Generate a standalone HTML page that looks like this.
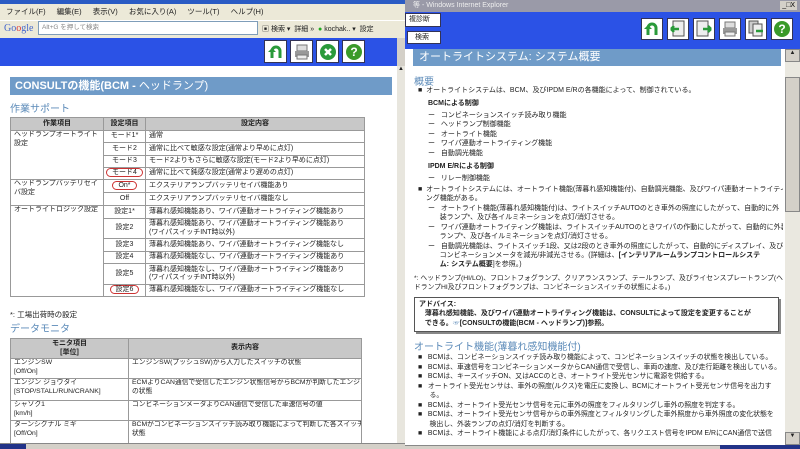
<!DOCTYPE html>
<html><head><meta charset="utf-8"><style>
*{margin:0;padding:0;box-sizing:border-box}
body{width:800px;height:449px;overflow:hidden;position:relative;background:#d4d0c8;font-family:"Liberation Sans","Noto Sans CJK JP",sans-serif;font-size:8px;color:#222}
.a{position:absolute}
.btn{position:absolute;width:23px;height:23px;background:#fff;border:1px solid #335;display:flex;align-items:center;justify-content:center}
table{border-collapse:collapse;position:absolute;background:#fff;table-layout:fixed}
td,th{border:1px solid #999;font-size:7px;padding:0 3px;vertical-align:middle;line-height:8.5px;white-space:nowrap;overflow:hidden}
td.w{white-space:normal;vertical-align:top}
th{background:#c8c8c8;font-weight:bold;text-align:center;vertical-align:middle}
td.c{text-align:center;vertical-align:middle;padding:0}
.ov{border:1px solid #c33;border-radius:8px;padding:0 5px}
.clip{position:absolute;left:405px;top:66px;width:378px;height:379px;overflow:hidden}
.r{position:absolute;left:13px;white-space:nowrap;font-size:7px;line-height:9.4px}
.t2 td{vertical-align:top;font-size:6.8px}
</style></head><body>
<!-- LEFT WINDOW -->
<div class="a" style="left:0;top:0;width:405px;height:4px;background:#2a5bc4"></div>
<div class="a" style="left:0;top:4px;width:405px;height:16px;background:#ece9d8;font-size:7.5px;line-height:16px;padding-left:6px;word-spacing:9px">ファイル(F) 編集(E) 表示(V) お気に入り(A) ツール(T) ヘルプ(H)</div>
<div class="a" style="left:0;top:20px;width:405px;height:18px;background:#ece9d8;border-top:1px solid #fff"></div>
<div class="a" style="left:4px;top:23px;font-size:10px;color:#4466cc;font-family:'Liberation Serif',serif">Go<span style="color:#d33">o</span>gle</div>
<div class="a" style="left:38px;top:21px;width:220px;height:14px;background:#fff;border:1px solid #7f9db9;font-size:6.5px;color:#888;line-height:12px;padding-left:3px">Alt+G を押して検索</div>
<div class="a" style="left:262px;top:24px;font-size:7px;color:#222;white-space:nowrap">▣ 検索 ▾ &nbsp;詳細 » &nbsp;<span style="color:#2a2">●</span> kochak.. ▾ &nbsp;設定</div>
<div class="a" style="left:0;top:38px;width:397px;height:28px;background:#2b52e6"></div>
<div class="btn" style="left:264px;top:40px"><svg width="18" height="18" viewBox="0 0 18 18"><path d="M5 15V8a4 4 0 0 1 8 0v7" fill="none" stroke="#2a9a3a" stroke-width="3"/><path d="M1 9l4-4 4 4z" fill="#2a9a3a"/></svg></div>
<div class="btn" style="left:290px;top:40px"><svg width="18" height="18"><rect x="4" y="2" width="10" height="6" fill="#ddd" stroke="#777"/><rect x="2" y="8" width="14" height="6" fill="#999"/><rect x="4" y="12" width="10" height="4" fill="#eee" stroke="#777"/></svg></div>
<div class="btn" style="left:316px;top:40px"><svg width="18" height="18"><circle cx="9" cy="9" r="8" fill="#2a9a3a"/><path d="M6 6l6 6M12 6l-6 6" stroke="#fff" stroke-width="2.5"/></svg></div>
<div class="btn" style="left:342px;top:40px"><svg width="18" height="18"><circle cx="9" cy="9" r="8" fill="#3a9a2a"/><text x="9" y="13" font-size="12" font-weight="bold" fill="#fff" text-anchor="middle" font-family="Liberation Sans">?</text></svg></div>
<div class="a" style="left:0;top:66px;width:397px;height:378px;background:#fff"></div>
<div class="a" style="left:397px;top:66px;width:8px;height:378px;background:#e8e6de"><div style="font-size:6px;text-align:center">▲</div></div>
<div class="a" style="left:10px;top:77px;width:382px;height:18px;background:#6f9bc8;color:#fff;font-size:11px;font-weight:bold;line-height:18px;padding-left:5px">CONSULTの機能(BCM - <span style="font-weight:normal">ヘッドランプ)</span></div>
<div class="a" style="left:10px;top:100px;font-size:10px;color:#5b8ab8">作業サポート</div>
<table style="left:10px;top:117px;width:355px">
<colgroup><col style="width:93px"><col style="width:42px"><col></colgroup>
<tr style="height:13px"><th>作業項目</th><th>設定項目</th><th>設定内容</th></tr>
<tr style="height:12px"><td rowspan="4" class="w">ヘッドランプオートライト設定</td><td class="c">モード1*</td><td>通常</td></tr>
<tr style="height:13px"><td class="c">モード2</td><td>通常に比べて敏感な設定(通常より早めに点灯)</td></tr>
<tr style="height:12px"><td class="c">モード3</td><td>モード2よりもさらに敏感な設定(モード2より早めに点灯)</td></tr>
<tr style="height:12px"><td class="c"><span class="ov">モード4</span></td><td>通常に比べて鈍感な設定(通常より遅めの点灯)</td></tr>
<tr style="height:13px"><td rowspan="2" class="w">ヘッドランプバッテリセイバ設定</td><td class="c"><span class="ov">On*</span></td><td>エクステリアランプバッテリセイバ機能あり</td></tr>
<tr style="height:13px"><td class="c">Off</td><td>エクステリアランプバッテリセイバ機能なし</td></tr>
<tr style="height:13px"><td rowspan="6" class="w">オートライトロジック設定</td><td class="c">設定1*</td><td>薄暮れ感知機能あり、ワイパ連動オートライティング機能あり</td></tr>
<tr style="height:20px"><td class="c">設定2</td><td>薄暮れ感知機能あり、ワイパ連動オートライティング機能あり<br>(ワイパスイッチINT時以外)</td></tr>
<tr style="height:13px"><td class="c">設定3</td><td>薄暮れ感知機能あり、ワイパ連動オートライティング機能なし</td></tr>
<tr style="height:12px"><td class="c">設定4</td><td>薄暮れ感知機能なし、ワイパ連動オートライティング機能あり</td></tr>
<tr style="height:21px"><td class="c">設定5</td><td>薄暮れ感知機能なし、ワイパ連動オートライティング機能あり<br>(ワイパスイッチINT時以外)</td></tr>
<tr style="height:12px"><td class="c"><span class="ov">設定6</span></td><td>薄暮れ感知機能なし、ワイパ連動オートライティング機能なし</td></tr>
</table>
<div class="a" style="left:10px;top:309px;font-size:7.5px">*: 工場出荷時の設定</div>
<div class="a" style="left:10px;top:320px;font-size:10px;color:#5b8ab8">データモニタ</div>
<table class="t2" style="left:10px;top:338px;width:352px">
<colgroup><col style="width:118px"><col></colgroup>
<tr style="height:20px"><th>モニタ項目<br>[単位]</th><th>表示内容</th></tr>
<tr style="height:20px"><td>エンジンSW<br>[Off/On]</td><td>エンジンSW(プッシュSW)から入力したスイッチの状態</td></tr>
<tr style="height:22px"><td>エンジン ジョウタイ<br>[STOP/STALL/RUN/CRANK]</td><td>ECMよりCAN通信で受信したエンジン状態信号からBCMが判断したエンジン<br>の状態</td></tr>
<tr style="height:20px"><td>シャソク1<br>[km/h]</td><td>コンビネーションメータよりCAN通信で受信した車速信号の値</td></tr>
<tr style="height:23px"><td>ターンシグナル ミギ<br>[Off/On]</td><td>BCMがコンビネーションスイッチ読み取り機能によって判断した各スイッチの<br>状態</td></tr>
</table>
<div class="a" style="left:0;top:443px;width:405px;height:6px;background:#d4d0c8;border-top:1px solid #888"></div>
<div class="a" style="left:0;top:444px;width:26px;height:5px;background:#223388"></div>

<!-- RIGHT WINDOW -->
<div class="a" style="left:405px;top:0;width:395px;height:12px;background:#9a9aa8;color:#eee;font-size:7px;line-height:12px;padding-left:8px">等 - Windows Internet Explorer<span style="position:absolute;right:3px;color:#000;background:#d4d0c8;padding:0 2px;line-height:9px;top:1px">_□X</span></div>
<div class="a" style="left:405px;top:12px;width:395px;height:37px;background:#2b52e6"></div>
<div class="a" style="left:405px;top:13px;width:36px;height:14px;background:#fff;border:1px solid #335;font-size:7px;line-height:12px;padding-left:3px">複診断</div>
<div class="a" style="left:407px;top:31px;width:34px;height:13px;background:#fff;border:1px solid #335;font-size:7px;line-height:11px;padding-left:7px">検索</div>
<div class="btn" style="left:641px;top:18px;width:22px;height:22px"><svg width="18" height="18"><path d="M5 15V8a4 4 0 0 1 8 0v7" fill="none" stroke="#2a9a3a" stroke-width="3"/><path d="M1 9l4-4 4 4z" fill="#2a9a3a"/></svg></div>
<div class="btn" style="left:667px;top:18px;width:22px;height:22px"><svg width="18" height="18"><rect x="4" y="1" width="11" height="15" fill="#eee" stroke="#555"/><path d="M2 9h8M2 9l3-3M2 9l3 3" stroke="#2a9a3a" stroke-width="2.5"/></svg></div>
<div class="btn" style="left:693px;top:18px;width:22px;height:22px"><svg width="18" height="18"><rect x="2" y="1" width="11" height="15" fill="#eee" stroke="#555"/><path d="M8 9h8M16 9l-3-3M16 9l-3 3" stroke="#2a9a3a" stroke-width="2.5"/></svg></div>
<div class="btn" style="left:719px;top:18px;width:22px;height:22px"><svg width="18" height="18"><rect x="4" y="2" width="10" height="6" fill="#ddd" stroke="#777"/><rect x="2" y="8" width="14" height="6" fill="#999"/><rect x="4" y="12" width="10" height="4" fill="#eee" stroke="#777"/></svg></div>
<div class="btn" style="left:745px;top:18px;width:22px;height:22px"><svg width="18" height="18"><rect x="2" y="1" width="9" height="12" fill="#ccc" stroke="#555"/><rect x="6" y="4" width="9" height="12" fill="#eee" stroke="#555"/><path d="M9 11h7" stroke="#2a9a3a" stroke-width="2.5"/></svg></div>
<div class="btn" style="left:771px;top:18px;width:22px;height:22px"><svg width="18" height="18"><circle cx="9" cy="9" r="8" fill="#3a9a2a"/><text x="9" y="13" font-size="12" font-weight="bold" fill="#fff" text-anchor="middle" font-family="Liberation Sans">?</text></svg></div>
<div class="a" style="left:405px;top:49px;width:380px;height:396px;background:#fff"></div>
<div class="a" style="left:785px;top:49px;width:15px;height:396px;background:#eae8e0"><div style="font-size:6px;text-align:center;background:#d4d0c8;border:1px solid #888;height:13px">▲</div><div style="margin-top:15px;height:135px;background:#d4d0c8;border:1px solid #888"></div><div style="position:absolute;bottom:0;width:15px;font-size:6px;text-align:center;background:#d4d0c8;border:1px solid #888;height:13px">▼</div></div>
<div class="a" style="left:413px;top:49px;width:368px;height:17px;background:#6f9bc8;color:#fff;font-size:11px;line-height:17px;padding-left:6px">オートライトシステム: システム概要</div>
<div class="clip">
<div class="a" style="left:9px;top:7px;font-size:10px;color:#5b8ab8">概要</div>
<div class="r" style="top:20px">■&nbsp; オートライトシステムは、BCM、及びIPDM E/Rの各機能によって、制御されている。</div>
<div class="r" style="top:33px;left:23px;font-weight:bold">BCMによる制御</div>
<div class="r" style="top:45px;left:23px">ー&nbsp;&nbsp; コンビネーションスイッチ読み取り機能<br>ー&nbsp;&nbsp; ヘッドランプ制御機能<br>ー&nbsp;&nbsp; オートライト機能<br>ー&nbsp;&nbsp; ワイパ連動オートライティング機能<br>ー&nbsp;&nbsp; 自動調光機能</div>
<div class="r" style="top:96px;left:23px;font-weight:bold">IPDM E/Rによる制御</div>
<div class="r" style="top:108px;left:23px">ー&nbsp;&nbsp; リレー制御機能</div>
<div class="r" style="top:119px">■&nbsp; オートライトシステムには、オートライト機能(薄暮れ感知機能付)、自動調光機能、及びワイパ連動オートライティ<br>&nbsp;&nbsp;&nbsp;&nbsp;ング機能がある。</div>
<div class="r" style="top:138px;left:23px">ー&nbsp;&nbsp; オートライト機能(薄暮れ感知機能付)は、ライトスイッチAUTOのとき車外の照度にしたがって、自動的に外<br>&nbsp;&nbsp;&nbsp;&nbsp;&nbsp;&nbsp;装ランプ*、及び各イルミネーションを点灯/消灯させる。<br>ー&nbsp;&nbsp; ワイパ連動オートライティング機能は、ライトスイッチAUTOのときワイパの作動にしたがって、自動的に外装<br>&nbsp;&nbsp;&nbsp;&nbsp;&nbsp;&nbsp;ランプ*、及び各イルミネーションを点灯/消灯させる。<br>ー&nbsp;&nbsp; 自動調光機能は、ライトスイッチ1段、又は2段のとき車外の照度にしたがって、自動的にディスプレイ、及び<br>&nbsp;&nbsp;&nbsp;&nbsp;&nbsp;&nbsp;コンビネーションメータを減光/非減光させる。(詳細は、<b>[インテリアルームランプコントロールシステ<br>&nbsp;&nbsp;&nbsp;&nbsp;&nbsp;&nbsp;ム: システム概要</b>]を参照。)</div>
<div class="r" style="top:208px;left:9px;font-size:6.8px">*: ヘッドランプ(HI/LO)、フロントフォグランプ、クリアランスランプ、テールランプ、及びライセンスプレートランプ(ヘッ<br>ドランプHI及びフロントフォグランプは、コンビネーションスイッチの状態による。)</div>
<div class="a" style="left:9px;top:231px;width:365px;height:35px;border:1px solid #555;box-shadow:2px 2px 0 #888;font-size:7px;line-height:9.4px;padding:2px 4px;font-weight:bold;white-space:nowrap;overflow:hidden">アドバイス:<br>&nbsp;&nbsp;&nbsp;薄暮れ感知機能、及びワイパ連動オートライティング機能は、CONSULTによって設定を変更することが<br>&nbsp;&nbsp;&nbsp;できる。<span style="color:#5b8ab8">☞</span>[CONSULTの機能(BCM - ヘッドランプ)]参照。</div>
<div class="a" style="left:9px;top:272px;font-size:10px;color:#5b8ab8;white-space:nowrap">オートライト機能(薄暮れ感知機能付)</div>
<div class="r" style="top:287px;font-size:6.9px;line-height:9.5px">■&nbsp;&nbsp; BCMは、コンビネーションスイッチ読み取り機能によって、コンビネーションスイッチの状態を検出している。<br>■&nbsp;&nbsp; BCMは、車速信号をコンビネーションメータからCAN通信で受信し、車両の速度、及び走行距離を検出している。<br>■&nbsp;&nbsp; BCMは、キースイッチON、又はACCのとき、オートライト受光センサに電源を供給する。<br>■&nbsp;&nbsp; オートライト受光センサは、車外の照度(ルクス)を電圧に変換し、BCMにオートライト受光センサ信号を出力す<br>&nbsp;&nbsp;&nbsp;&nbsp;&nbsp;&nbsp;る。<br>■&nbsp;&nbsp; BCMは、オートライト受光センサ信号を元に車外の照度をフィルタリングし車外の照度を判定する。<br>■&nbsp;&nbsp; BCMは、オートライト受光センサ信号からの車外照度とフィルタリングした車外照度から車外照度の変化状態を<br>&nbsp;&nbsp;&nbsp;&nbsp;&nbsp;&nbsp;検出し、外装ランプの点灯/消灯を判断する。<br>■&nbsp;&nbsp; BCMは、オートライト機能による点灯/消灯条件にしたがって、各リクエスト信号をIPDM E/RにCAN通信で送信</div>
</div>
<div class="a" style="left:405px;top:445px;width:395px;height:4px;background:#d4d0c8;border-top:1px solid #888"></div>
<div class="a" style="left:720px;top:445px;width:80px;height:4px;background:#223388"></div>
</body></html>
